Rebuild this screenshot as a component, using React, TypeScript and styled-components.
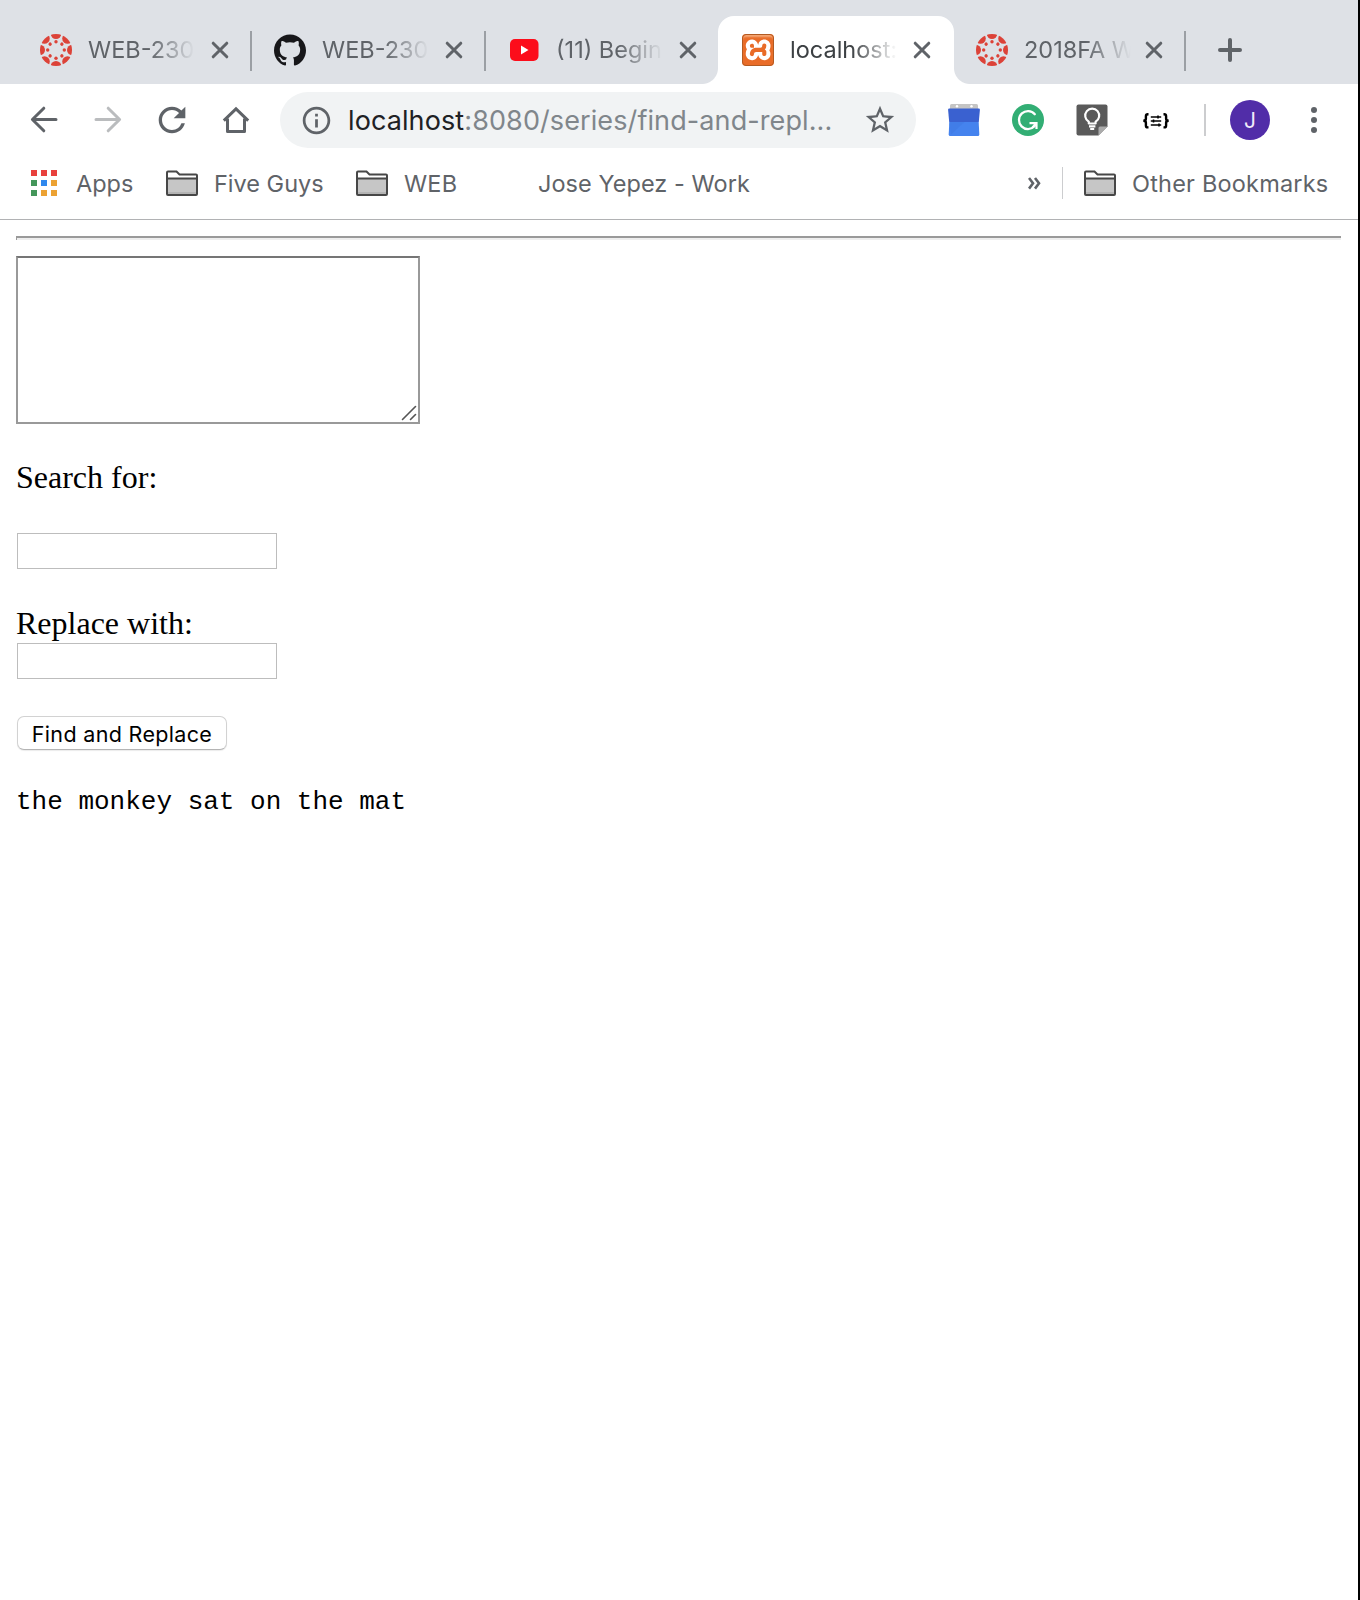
import React from "react";
import styled, { createGlobalStyle, css } from "styled-components";
import { SiXampp, SiGithub } from "react-icons/si";
import { MdRefresh, MdStarBorder, MdInfoOutline } from "react-icons/md";

const GlobalStyle = createGlobalStyle`
  * { box-sizing: border-box; }
  body { margin: 0; background: #fff; }
`;

const ui = css`
  font-family: Inter, "Liberation Sans", sans-serif;
`;

const Window = styled.div`
  width: 1360px;
  height: 1600px;
  border-right: 2px solid #000;
  background: #fff;
  overflow: hidden;
  display: flex;
  flex-direction: column;
`;

/* ---------- Tab strip ---------- */

const TabStrip = styled.div`
  height: 84px;
  flex: none;
  padding: 16px 0 0 16px;
  display: flex;
  background: #dee1e6;
`;

const Tab = styled.div<{ $active?: boolean; $last?: boolean; $divider?: boolean }>`
  ${ui}
  position: relative;
  width: 234px;
  height: 68px;
  flex: none;
  padding: 0 ${(p) => (p.$last ? 19 : 17)}px 0 24px;
  display: flex;
  align-items: center;
  color: ${(p) => (p.$active ? "#3c4043" : "#5f6368")};

  ${(p) =>
    p.$divider &&
    css`
      &::after {
        content: "";
        position: absolute;
        right: ${p.$last ? 0 : -2}px;
        top: 15px;
        width: 2px;
        height: 40px;
        background: #9b9fa4;
      }
    `}

  ${(p) =>
    p.$active &&
    css`
      &::before {
        content: "";
        position: absolute;
        z-index: 0;
        inset: 0 -18px 0 -16px;
        background:
          radial-gradient(circle at 0 0, transparent 15.5px, #fff 16.5px) left bottom / 16px 16px no-repeat,
          radial-gradient(circle at 100% 0, transparent 15.5px, #fff 16.5px) right bottom / 16px 16px no-repeat;
      }
      &::after {
        content: "";
        position: absolute;
        z-index: 0;
        inset: 0 -2px 0 0;
        border-radius: 16px 16px 0 0;
        background: #fff;
      }
      & > * {
        position: relative;
        z-index: 1;
      }
    `}
`;

const Favicon = styled.span`
  width: 32px;
  height: 32px;
  flex: none;
  display: flex;
  align-items: center;
  justify-content: center;
`;

const TabTitle = styled.span`
  width: 108px;
  margin-left: 16px;
  flex: none;
  overflow: hidden;
  white-space: nowrap;
  font-size: 23.5px;
  line-height: 32px;
  -webkit-mask-image: linear-gradient(to right, #000 57%, transparent 99%);
  mask-image: linear-gradient(to right, #000 57%, transparent 99%);
`;

const CloseButton = styled.span`
  margin-left: auto;
  margin-right: 4px;
  display: flex;
  color: #5f6368;
`;

const NewTab = styled.span`
  margin-left: 32px;
  height: 68px;
  display: flex;
  align-items: center;
`;

/* ---------- Toolbar ---------- */

const Toolbar = styled.div`
  height: 72px;
  flex: none;
  padding: 0 28px 0 24px;
  display: flex;
  align-items: center;
`;

const NavButton = styled.span<{ $disabled?: boolean }>`
  width: 40px;
  height: 40px;
  margin-right: 24px;
  flex: none;
  display: flex;
  align-items: center;
  justify-content: center;
  color: ${(p) => (p.$disabled ? "#babcbe" : "#5f6368")};
`;

const Omnibox = styled.div`
  ${ui}
  width: 636px;
  height: 56px;
  flex: none;
  padding: 0 19px 0 20px;
  display: flex;
  align-items: center;
  border-radius: 28px;
  background: #f1f3f4;
  color: #5f6368;
`;

const Address = styled.span`
  margin-left: 15px;
  padding-top: 2px;
  flex: 1;
  font-size: 27px;
  line-height: 40px;
  white-space: nowrap;
  letter-spacing: 0.1px;
  color: #80868b;

  b {
    font-weight: 400;
    color: #202124;
  }
`;

const Extensions = styled.div`
  margin-left: 32px;
  display: flex;
  gap: 32px;
`;

const Divider = styled.span<{ $thin?: boolean }>`
  width: ${(p) => (p.$thin ? 1 : 2)}px;
  height: 32px;
  flex: none;
  background: #cccdcf;
`;

const Avatar = styled.span`
  ${ui}
  width: 40px;
  height: 40px;
  margin-left: 24px;
  border-radius: 50%;
  display: flex;
  align-items: center;
  justify-content: center;
  background: #512da8;
  color: #f0ebfa;
  font-size: 21px;
`;

const MenuDots = styled.span`
  width: 6px;
  margin-left: 41px;
  display: flex;
  flex-direction: column;
  gap: 4px;

  i {
    height: 6px;
    border-radius: 50%;
    background: #5f6368;
  }
`;

/* ---------- Bookmarks ---------- */

const BookmarkBar = styled.div`
  ${ui}
  height: 64px;
  flex: none;
  padding: 0 29px 9px 31px;
  display: flex;
  align-items: center;
  border-bottom: 1px solid #b1b2b4;
  color: #5f6368;
  font-size: 23.5px;
  line-height: 32px;
  white-space: nowrap;
`;

const Bookmark = styled.span<{ $gap: number; $before?: number; $width?: number; $track?: number }>`
  display: flex;
  align-items: center;
  gap: ${(p) => p.$gap}px;
  margin-left: ${(p) => p.$before ?? 0}px;
  letter-spacing: ${(p) => p.$track ?? 0}px;
  ${(p) => p.$width && `width: ${p.$width}px;`}
`;

const BookmarkName = styled.span`
  padding-top: 2px;
`;

const AppsGrid = styled.span`
  display: grid;
  grid-template-columns: repeat(3, 6px);
  grid-auto-rows: 6px;
  gap: 4px;
`;

const AppsDot = styled.i<{ $color: string }>`
  background: ${(p) => p.$color};
`;

const Overflow = styled.span`
  margin-left: auto;
  margin-right: 21px;
  display: flex;
  color: #5f6368;
`;

/* ---------- Page ---------- */

const Page = styled.main`
  padding: 16px;
  font-family: "Liberation Serif", "Times New Roman", serif;
  font-size: 32px;
  line-height: 36px;
  color: #000;
`;

const Rule = styled.hr`
  height: 4px;
  margin: 0 1px 16px 0;
  border: 0;
  border-top: 2px solid #9a9a9a;
  border-left: 1px solid #9a9a9a;
  background: #eee;
`;

const TextBox = styled.div`
  width: 404px;
  height: 168px;
  padding: 0 1px 1px 0;
  display: flex;
  align-items: flex-end;
  justify-content: flex-end;
  border: 2px solid #999;
  border-top-color: #757575;
  background: #fff;
`;

const Label = styled.label<{ $top: number; $bottom: number }>`
  display: block;
  padding-top: ${(p) => p.$top}px;
  padding-bottom: ${(p) => p.$bottom}px;
`;

const Field = styled.input`
  display: block;
  width: 260px;
  height: 36px;
  margin-left: 1px;
  padding: 0 4px;
  border: 1px solid #bdbdbd;
  border-radius: 0;
  background: #fff;
`;

const SubmitButton = styled.button`
  ${ui}
  display: block;
  width: 210px;
  height: 34px;
  margin: 37px 0 0 1px;
  padding: 2px 0 0;
  border: 1px solid #d2d2d2;
  border-bottom-color: #b4b4b4;
  border-radius: 7px;
  background: #fff;
  box-shadow: 0 1px 1px rgba(0, 0, 0, 0.08);
  color: #000;
  font-size: 21.5px;
  letter-spacing: 0.33px;
  line-height: 28px;
  white-space: nowrap;
`;

const Output = styled.pre`
  margin: 37px 0 0;
  font-family: "Liberation Mono", "Courier New", monospace;
  font-size: 26px;
  line-height: 30px;
`;

/* ---------- Icons ---------- */

const rays = [0, 45, 90, 135, 180, 225, 270, 315];

const CanvasIcon = () => (
  <svg width="32" height="32" viewBox="0 0 32 32" fill="#dc4238">
    <defs>
      <clipPath id="canvas-disc">
        <circle cx="16" cy="16" r="16" />
      </clipPath>
    </defs>
    <g clipPath="url(#canvas-disc)">
      {rays.map((a) => (
        <g key={a} transform={`rotate(${a} 16 16)`}>
          <circle cx="16" cy="-0.3" r="5.3" />
          <circle cx="16" cy="7.700" r="1.700" />
        </g>
      ))}
    </g>
  </svg>
);

const YouTubeIcon = () => (
  <svg width="32" height="32" viewBox="0 0 32 32">
    <rect x="2" y="5" width="28.5" height="22" rx="5" fill="#fc0d1b" />
    <path d="M13 11.5v9l7.5-4.5z" fill="#fff" />
  </svg>
);

const XamppBadge = styled.span`
  position: relative;
  width: 32px;
  height: 32px;
  display: flex;
  align-items: center;
  justify-content: center;
  overflow: hidden;
  border-radius: 4px;
  background: #fff;
  color: #e96c28;

  svg {
    flex: none;
  }

  &::after {
    content: "";
    position: absolute;
    inset: 0;
    border: 1.5px solid #b25a22;
    border-radius: 4px;
    box-shadow: inset 0 3px 2px -1px rgba(255, 215, 180, 0.55);
  }
`;

const CloseIcon = () => (
  <svg width="18" height="18" viewBox="0 0 18 18" stroke="currentColor" strokeWidth="3" fill="none">
    <path d="M2.200 2.200l13.600 13.600M15.800 2.200L2.200 15.800" strokeLinecap="round" />
  </svg>
);

const PlusIcon = () => (
  <svg width="24" height="24" viewBox="0 0 24 24" stroke="#5f6368" strokeWidth="4">
    <path d="M12 2v20M2 12h20" strokeLinecap="round" />
  </svg>
);

const ArrowIcon = ({ flip }: { flip?: boolean }) => (
  <svg
    width="28"
    height="28"
    viewBox="0 0 28 28"
    fill="none"
    stroke="currentColor"
    strokeWidth="3"
    transform={flip ? "scale(-1 1)" : undefined}
  >
    <path d="M26 13.500H3M13.800 2.200L2.400 13.500l11.400 11.300" strokeLinejoin="round" strokeLinecap="round" />
  </svg>
);

const HomeIcon = () => (
  <svg width="28" height="28" viewBox="0 0 28 28" fill="none" stroke="currentColor" strokeWidth="3">
    <path d="M5.5 12.5V25.500h17V12.5" strokeLinejoin="round" />
    <path d="M1.8 14.6L14 2.900l12.2 11.7" />
  </svg>
);

const CalendarIcon = () => (
  <svg width="32" height="32" viewBox="0 0 32 32">
    <path d="M2 1.5Q2 0 3.500 0h25Q30 0 30 1.500V6H2z" fill="#c4c4c4" />
    <circle cx="9" cy="2.300" r="1.200" fill="#fff" />
    <circle cx="23.500" cy="2.300" r="1.200" fill="#fff" />
    <path d="M1.300 4.500h29.400q1.300 0 1.200 1.300L30.800 18H1.200L.1 5.800Q0 4.500 1.300 4.500z" fill="#3a61d0" />
    <path d="M1.300 18h29.400l.6 12.500q0 1.500-1.500 1.500H2.200Q.7 32 .7 30.500z" fill="#4583ee" />
    <path d="M1.300 18h15L3 30.500z" fill="#3d78e2" opacity=".5" />
  </svg>
);

const GrammarlyIcon = () => (
  <svg width="32" height="32" viewBox="0 0 32 32" fill="none" stroke="#fff" strokeWidth="2.300">
    <circle cx="16" cy="16" r="16" fill="#32ae74" stroke="none" />
    <path d="M22.800 10.200A9 9 0 1 0 22.500 22.300" strokeLinecap="round" />
    <path d="M17.500 19.200h7V25M24 19.500l-3.500 4" strokeWidth="2.200" />
  </svg>
);

const KeepIcon = () => (
  <svg width="32" height="32" viewBox="0 0 32 32">
    <path d="M2.500 .500h27Q31.500.500 31.500 2.500V22.500L22.500 31.500h-20Q.500 31.500.500 29.500v-27Q.500.500 2.500.500z" fill="#5a5a5a" />
    <path d="M22.500 31.500v-7.500q0-1.500 1.500-1.500h7.500z" fill="#ababab" />
    <path
      d="M12.800 19.500v-1.800a7 7 0 1 1 6.800 0v1.800zM13 22.300h6.400M14.200 25h4"
      fill="none"
      stroke="#fff"
      strokeWidth="2.200"
      strokeLinejoin="round"
    />
  </svg>
);

const BracesIcon = () => (
  <svg width="32" height="32" viewBox="0 0 32 32" fill="none" stroke="#000" strokeWidth="2.400">
    <path d="M8.500 10.200H7.800q-1.900 0-1.900 2v2.600q0 2-2.600 2 2.600 0 2.600 2v2.600q0 2 1.900 2h.7" />
    <path d="M23.500 10.200h.7q1.900 0 1.900 2v2.600q0 2 2.600 2-2.600 0-2.600 2v2.600q0 2-1.900 2h-.7" />
    <path d="M10.800 13h10.400M10.800 17h10.400M10.800 21h10.400" strokeWidth="1.600" />
    <path d="M18 11.500v3M13.500 15.500v3M19 19.500v3" strokeWidth="1.600" />
  </svg>
);

const FolderIcon = () => (
  <svg width="32" height="26" viewBox="0 0 32 26">
    <path d="M2 1.500h8.500l3 3H30q1 0 1 1V24q0 1-1 1H2q-1 0-1-1V2.500q0-1 1-1z" fill="#fff" stroke="#474747" strokeWidth="2" />
    <path d="M2 9h28v15H2z" fill="#c6c6c6" />
    <path d="M2 22h28v2H2z" fill="#b4b4b4" />
    <path d="M1 8.500h30" stroke="#474747" strokeWidth="2" />
  </svg>
);

const ChevronsIcon = () => (
  <svg width="13" height="14" viewBox="0 0 13 14" fill="none" stroke="currentColor" strokeWidth="2.600">
    <path d="M1 2L5 7.300 1 12.600M7 2l4 5.300-4 5.300" />
  </svg>
);

const ResizeGrip = () => (
  <svg width="16" height="16" viewBox="0 0 16 16" stroke="#555" strokeWidth="1.600" strokeLinecap="round">
    <path d="M1.500 14.500L14.500 1.500M9.500 14.500l5-5" />
  </svg>
);

const appColors = ["#e8413d", "#e8413d", "#e8413d", "#44965a", "#2f88ee", "#eca233", "#44965a", "#eca233", "#eca233"];

const tabs = [
  { title: "WEB-230", icon: <CanvasIcon />, divider: true },
  { title: "WEB-230", icon: <SiGithub size={32} color="#17171a" />, divider: true },
  { title: "(11) Begin", icon: <YouTubeIcon /> },
  {
    title: "localhost:",
    icon: (
      <XamppBadge>
        <SiXampp size={34} />
      </XamppBadge>
    ),
    active: true,
  },
  { title: "2018FA W", icon: <CanvasIcon />, divider: true, last: true },
];

export default function App() {
  return (
    <Window>
      <GlobalStyle />
      <TabStrip>
        {tabs.map((t, i) => (
          <Tab key={i} $active={t.active} $divider={t.divider} $last={t.last}>
            <Favicon>{t.icon}</Favicon>
            <TabTitle>{t.title}</TabTitle>
            <CloseButton>
              <CloseIcon />
            </CloseButton>
          </Tab>
        ))}
        <NewTab>
          <PlusIcon />
        </NewTab>
      </TabStrip>

      <Toolbar>
        <NavButton>
          <ArrowIcon />
        </NavButton>
        <NavButton $disabled>
          <ArrowIcon flip />
        </NavButton>
        <NavButton>
          <MdRefresh size={40} />
        </NavButton>
        <NavButton>
          <HomeIcon />
        </NavButton>
        <Omnibox>
          <MdInfoOutline size={33} />
          <Address>
            <b>localhost</b>:8080/series/find-and-repl...
          </Address>
          <MdStarBorder size={34} />
        </Omnibox>
        <Extensions>
          <CalendarIcon />
          <GrammarlyIcon />
          <KeepIcon />
          <BracesIcon />
          <Divider />
        </Extensions>
        <Avatar>J</Avatar>
        <MenuDots>
          <i />
          <i />
          <i />
        </MenuDots>
      </Toolbar>

      <BookmarkBar>
        <Bookmark $gap={19} $width={135}>
          <AppsGrid>
            {appColors.map((c, i) => (
              <AppsDot key={i} $color={c} />
            ))}
          </AppsGrid>
          <BookmarkName>Apps</BookmarkName>
        </Bookmark>
        <Bookmark $gap={16} $width={190}>
          <FolderIcon />
          <BookmarkName>Five Guys</BookmarkName>
        </Bookmark>
        <Bookmark $gap={16} $width={182} $track={0.2}>
          <FolderIcon />
          <BookmarkName>WEB</BookmarkName>
        </Bookmark>
        <Bookmark $gap={0} $track={0.06}>
          <BookmarkName>Jose Yepez - Work</BookmarkName>
        </Bookmark>
        <Overflow>
          <ChevronsIcon />
        </Overflow>
        <Divider $thin />
        <Bookmark $gap={16} $before={21} $width={245} $track={0.2}>
          <FolderIcon />
          <BookmarkName>Other Bookmarks</BookmarkName>
        </Bookmark>
      </BookmarkBar>

      <Page>
        <Rule />
        <TextBox>
          <ResizeGrip />
        </TextBox>
        <Label $top={35} $bottom={38}>
          Search for:
        </Label>
        <Field />
        <Label $top={36} $bottom={2}>
          Replace with:
        </Label>
        <Field />
        <SubmitButton>Find and Replace</SubmitButton>
        <Output>the monkey sat on the mat</Output>
      </Page>
    </Window>
  );
}
